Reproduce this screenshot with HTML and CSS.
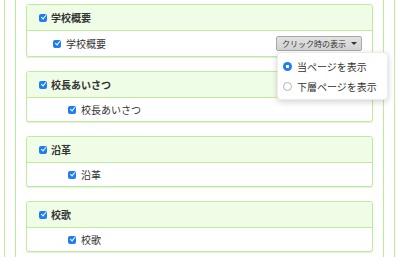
FILE: index.html
```html
<!DOCTYPE html>
<html lang="ja">
<head>
    <meta charset="UTF-8">
    <title>メニュー設定</title>
    <link rel="stylesheet" href="styles.css">
</head>
<body>
    <div class="outer">
        <div class="inner">
            <!-- 学校概要 -->
            <div class="panel">
                <div class="panel-heading">
                    <span class="check"></span>学校概要
                </div>
                <div class="panel-body first">
                    <div class="item"><span class="check"></span>学校概要</div>
                    <div class="dropdown">
                        <button class="dropdown-toggle">クリック時の表示<span class="caret"></span></button>
                        <ul class="dropdown-menu">
                            <li><span class="radio checked"></span>当ページを表示</li>
                            <li><span class="radio"></span>下層ページを表示</li>
                        </ul>
                    </div>
                </div>
            </div>

            <div class="panel">
                <div class="panel-heading">
                    <span class="check"></span>校長あいさつ
                </div>
                <div class="panel-body">
                    <div class="item"><span class="check"></span>校長あいさつ</div>
                </div>
            </div>

            <div class="panel">
                <div class="panel-heading">
                    <span class="check"></span>沿革
                </div>
                <div class="panel-body">
                    <div class="item"><span class="check"></span>沿革</div>
                </div>
            </div>

            <div class="panel">
                <div class="panel-heading">
                    <span class="check"></span>校歌
                </div>
                <div class="panel-body">
                    <div class="item"><span class="check"></span>校歌</div>
                </div>
            </div>
        </div>
    </div>
</body>
</html>
```

FILE: styles.css
```css
:root {
    --green-line: #bfeb9f;
    --green-bg: #effde7;
    --text: #333333;
    --blue: #1f7df2;
}

* {
    margin: 0;
    padding: 0;
    box-sizing: border-box;
}

body {
    margin: 0 5px 0 4px;
    font-family: "Noto Sans CJK JP", "Liberation Sans", sans-serif;
    font-size: 10px;
    color: var(--text);
    background: #ffffff;
    overflow: hidden;
}

.outer,
.inner {
    border: 1px solid var(--green-line);
    border-top: none;
    padding: 0 10px;
}

.inner {
    padding-top: 4px;
    height: 260px;
}

.panel {
    border: 1px solid var(--green-line);
    border-radius: 3px;
    margin-bottom: 14px;
    box-shadow: 0 1px 1px rgba(120, 200, 80, 0.25);
    background: #ffffff;
}

.panel-heading {
    height: 26px;
    display: flex;
    align-items: center;
    gap: 4px;
    padding-left: 12px;
    font-weight: 700;
    background: var(--green-bg);
    border-bottom: 1px solid var(--green-line);
    border-radius: 3px 3px 0 0;
}

.panel-body {
    height: 23px;
    display: flex;
    align-items: center;
    padding-left: 41px;
}

.panel-body.first {
    height: 25px;
    padding: 0 10px 0 26px;
    justify-content: space-between;
}

.item {
    display: flex;
    align-items: center;
    gap: 5px;
}

/* チェックボックス */
.check {
    position: relative;
    width: 8px;
    height: 8px;
    border-radius: 2px;
    background: var(--blue);
    flex-shrink: 0;
}

.check::after {
    content: "";
    position: absolute;
    left: 2.6px;
    top: 0.8px;
    width: 2px;
    height: 4.4px;
    border: solid #ffffff;
    border-width: 0 1.3px 1.3px 0;
    transform: rotate(40deg);
}

/* ドロップダウン */
.dropdown {
    position: relative;
}

.dropdown-toggle {
    display: flex;
    align-items: center;
    gap: 5px;
    height: 15px;
    padding: 0 4px 0 5px;
    font-family: inherit;
    font-size: 8px;
    color: #333333;
    background: linear-gradient(#e2e2e2, #d2d2d2);
    border: 1px solid #a8a8a8;
    border-radius: 2px;
}

.caret {
    width: 0;
    height: 0;
    border-left: 3px solid transparent;
    border-right: 3px solid transparent;
    border-top: 3px solid #333333;
}

.dropdown-menu {
    position: absolute;
    top: 16px;
    left: 1px;
    width: 111px;
    list-style: none;
    padding: 3px 0;
    background: #ffffff;
    border: 1px solid rgba(0, 0, 0, 0.08);
    border-radius: 4px;
    box-shadow: 0 2px 6px rgba(0, 0, 0, 0.18);
    z-index: 10;
}

.dropdown-menu li {
    display: flex;
    align-items: center;
    gap: 5px;
    height: 20px;
    padding-left: 5px;
    white-space: nowrap;
}

.radio {
    width: 9px;
    height: 9px;
    border-radius: 50%;
    border: 1px solid #b4b4b4;
    background: #ffffff;
    flex-shrink: 0;
}

.radio.checked {
    border: none;
    background: radial-gradient(circle, #ffffff 0 1.6px, var(--blue) 2px);
}
```
